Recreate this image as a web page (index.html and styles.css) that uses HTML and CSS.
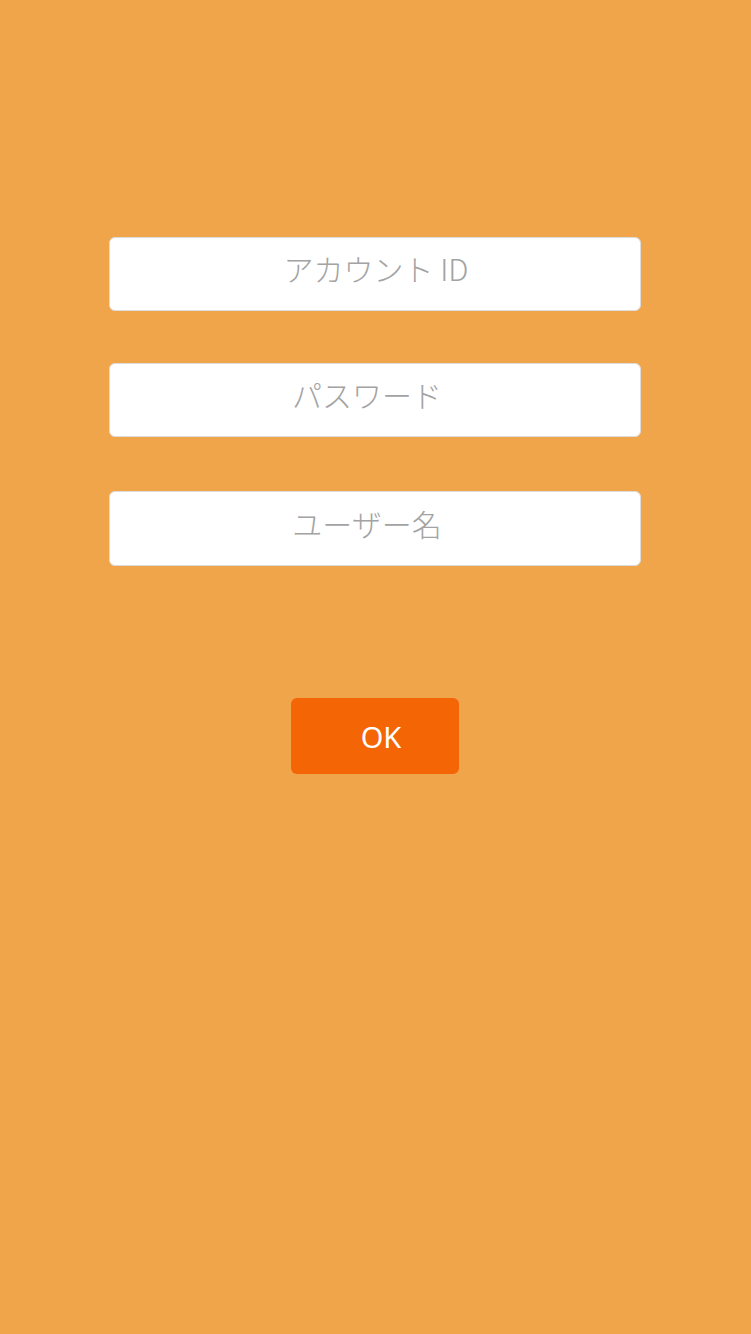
FILE: index.html
```html
<!DOCTYPE html>
<html lang="ja">
<head>
<meta charset="utf-8">
<link rel="stylesheet" href="styles.css">
</head>
<body>
<main class="form">
  <input class="field field-1" type="text" placeholder="アカウント ID">
  <input class="field field-2" type="password" placeholder="パスワード">
  <input class="field field-3" type="text" placeholder="ユーザー名">
  <button class="ok">OK</button>
</main>
</body>
</html>
```
FILE: styles.css
```css
html, body {
  margin: 0;
  padding: 0;
  background: #f0a54b;
  height: 100%;
}
.form {
  display: flex;
  flex-direction: column;
  align-items: center;
  padding-top: 237px;
}
.field {
  box-sizing: border-box;
  width: 532px;
  height: 74px;
  margin: 0 1px 0 0;
  border: 1px solid #dcdcdc;
  border-radius: 6px;
  background: #fff;
  font-family: "Noto Sans CJK JP", "Noto Sans", sans-serif;
  font-weight: 300;
  font-size: 30px;
  text-align: center;
  padding: 0 0 12px 0;
  color: #555;
  outline: none;
}
.field::placeholder {
  color: #a3a3a3;
  opacity: 1;
}
.field-1 { padding-left: 2px; }
.field-2 { margin-top: 52px; padding-right: 16px; }
.field-3 { margin-top: 54px; height: 75px; padding-right: 16px; }
.ok {
  margin: 132px 1px 0 0;
  width: 168px;
  height: 76px;
  border: none;
  border-radius: 6px;
  background: #f46506;
  color: #fff;
  font-family: "Noto Sans", sans-serif;
  font-size: 29px;
  padding: 0 0 0 12px;
}
```
